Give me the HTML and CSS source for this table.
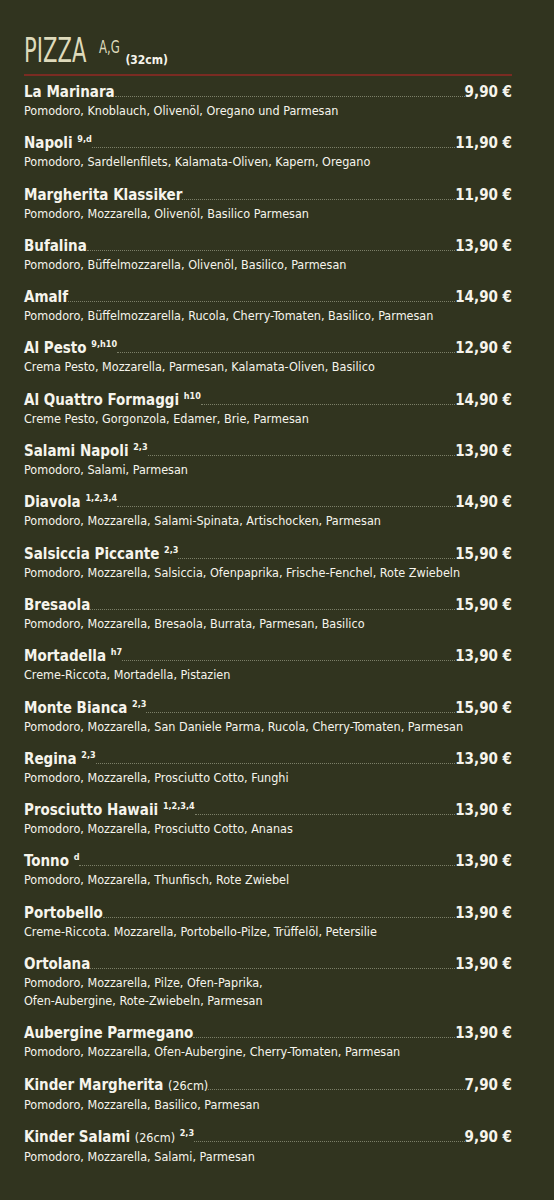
FILE: index.html
```html
<!DOCTYPE html>
<html>
<head>
  <meta charset="utf-8">
  <title>Pizza</title>
  <link rel="stylesheet" href="styles.css">
</head>
<body>
  <div class="menu">
    <h1 class="title"><span class="title-word">PIZZA</span><span class="title-allergens">A,G</span><span class="title-size">(32cm)</span></h1>

    <ul class="items">
      <li class="item">
        <div class="row"><span class="name">La Marinara</span><span class="dots"></span><span class="price">9,90 €</span></div>
        <p class="desc">Pomodoro, Knoblauch, Olivenöl, Oregano und Parmesan</p>
      </li>
      <li class="item">
        <div class="row"><span class="name">Napoli <sup>9,d</sup></span><span class="dots"></span><span class="price">11,90 €</span></div>
        <p class="desc">Pomodoro, Sardellenfilets, Kalamata-Oliven, Kapern, Oregano</p>
      </li>
      <li class="item">
        <div class="row"><span class="name">Margherita Klassiker</span><span class="dots"></span><span class="price">11,90 €</span></div>
        <p class="desc">Pomodoro, Mozzarella, Olivenöl, Basilico Parmesan</p>
      </li>
      <li class="item">
        <div class="row"><span class="name">Bufalina</span><span class="dots"></span><span class="price">13,90 €</span></div>
        <p class="desc">Pomodoro, Büffelmozzarella, Olivenöl, Basilico, Parmesan</p>
      </li>
      <li class="item">
        <div class="row"><span class="name">Amalf</span><span class="dots"></span><span class="price">14,90 €</span></div>
        <p class="desc">Pomodoro, Büffelmozzarella, Rucola, Cherry-Tomaten, Basilico, Parmesan</p>
      </li>
      <li class="item">
        <div class="row"><span class="name">Al Pesto <sup>9,h10</sup></span><span class="dots"></span><span class="price">12,90 €</span></div>
        <p class="desc">Crema Pesto, Mozzarella, Parmesan, Kalamata-Oliven, Basilico</p>
      </li>
      <li class="item">
        <div class="row"><span class="name">Al Quattro Formaggi <sup>h10</sup></span><span class="dots"></span><span class="price">14,90 €</span></div>
        <p class="desc">Creme Pesto, Gorgonzola, Edamer, Brie, Parmesan</p>
      </li>
      <li class="item">
        <div class="row"><span class="name">Salami Napoli <sup>2,3</sup></span><span class="dots"></span><span class="price">13,90 €</span></div>
        <p class="desc">Pomodoro, Salami, Parmesan</p>
      </li>
      <li class="item">
        <div class="row"><span class="name">Diavola <sup>1,2,3,4</sup></span><span class="dots"></span><span class="price">14,90 €</span></div>
        <p class="desc">Pomodoro, Mozzarella, Salami-Spinata, Artischocken, Parmesan</p>
      </li>
      <li class="item">
        <div class="row"><span class="name">Salsiccia Piccante <sup>2,3</sup></span><span class="dots"></span><span class="price">15,90 €</span></div>
        <p class="desc">Pomodoro, Mozzarella, Salsiccia, Ofenpaprika, Frische-Fenchel, Rote Zwiebeln</p>
      </li>
      <li class="item">
        <div class="row"><span class="name">Bresaola</span><span class="dots"></span><span class="price">15,90 €</span></div>
        <p class="desc">Pomodoro, Mozzarella, Bresaola, Burrata, Parmesan, Basilico</p>
      </li>
      <li class="item">
        <div class="row"><span class="name">Mortadella <sup>h7</sup></span><span class="dots"></span><span class="price">13,90 €</span></div>
        <p class="desc">Creme-Riccota, Mortadella, Pistazien</p>
      </li>
      <li class="item">
        <div class="row"><span class="name">Monte Bianca <sup>2,3</sup></span><span class="dots"></span><span class="price">15,90 €</span></div>
        <p class="desc">Pomodoro, Mozzarella, San Daniele Parma, Rucola, Cherry-Tomaten, Parmesan</p>
      </li>
      <li class="item">
        <div class="row"><span class="name">Regina <sup>2,3</sup></span><span class="dots"></span><span class="price">13,90 €</span></div>
        <p class="desc">Pomodoro, Mozzarella, Prosciutto Cotto, Funghi</p>
      </li>
      <li class="item">
        <div class="row"><span class="name">Prosciutto Hawaii <sup>1,2,3,4</sup></span><span class="dots"></span><span class="price">13,90 €</span></div>
        <p class="desc">Pomodoro, Mozzarella, Prosciutto Cotto, Ananas</p>
      </li>
      <li class="item">
        <div class="row"><span class="name">Tonno <sup>d</sup></span><span class="dots"></span><span class="price">13,90 €</span></div>
        <p class="desc">Pomodoro, Mozzarella, Thunfisch, Rote Zwiebel</p>
      </li>
      <li class="item">
        <div class="row"><span class="name">Portobello</span><span class="dots"></span><span class="price">13,90 €</span></div>
        <p class="desc">Creme-Riccota. Mozzarella, Portobello-Pilze, Trüffelöl, Petersilie</p>
      </li>
      <li class="item">
        <div class="row"><span class="name">Ortolana</span><span class="dots"></span><span class="price">13,90 €</span></div>
        <p class="desc">Pomodoro, Mozzarella, Pilze, Ofen-Paprika,<br>Ofen-Aubergine, Rote-Zwiebeln, Parmesan</p>
      </li>
      <li class="item">
        <div class="row"><span class="name">Aubergine Parmegano</span><span class="dots"></span><span class="price">13,90 €</span></div>
        <p class="desc">Pomodoro, Mozzarella, Ofen-Aubergine, Cherry-Tomaten, Parmesan</p>
      </li>
      <li class="item">
        <div class="row"><span class="name">Kinder Margherita <small>(26cm)</small></span><span class="dots"></span><span class="price">7,90 €</span></div>
        <p class="desc">Pomodoro, Mozzarella, Basilico, Parmesan</p>
      </li>
      <li class="item">
        <div class="row"><span class="name">Kinder Salami <small>(26cm)</small> <sup>2,3</sup></span><span class="dots"></span><span class="price">9,90 €</span></div>
        <p class="desc">Pomodoro, Mozzarella, Salami, Parmesan</p>
      </li>
    </ul>
  </div>
</body>
</html>
```

FILE: styles.css
```css
body {
  margin: 0;
  background: #31341f;
  color: #f6f4ec;
  font-family: "DejaVu Sans Condensed", "DejaVu Sans", sans-serif;
}

.menu {
  padding: 36px 42px 40px 24px;
}

/* heading */

.title {
  display: flex;
  align-items: baseline;
  height: 30px;
  margin: 0;
  padding-bottom: 8px;
  border-bottom: 2px solid #7a2b22;
  color: #dedabb;
  font-weight: normal;
  line-height: 30px;
  white-space: nowrap;
}

.title-word {
  display: inline-block;
  font-family: "DejaVu Sans", sans-serif;
  font-size: 33px;
  transform: scaleX(0.64);
  transform-origin: left center;
  margin-right: -40px;
}

.title-allergens {
  display: inline-block;
  font-family: "DejaVu Sans", sans-serif;
  font-size: 18px;
  transform: scaleX(0.65) translateY(-9px);
  transform-origin: left center;
  margin-left: 18px;
  margin-right: -9px;
}

.title-size {
  font-size: 12px;
  font-weight: bold;
  color: #f6f4ec;
  margin-left: 3px;
  position: relative;
  top: 2px;
}

/* list */

.items {
  list-style: none;
  margin: 0;
  padding: 6px 0 0;
}

.item {
  margin-bottom: 13.3px;
}

.row {
  display: flex;
  align-items: baseline;
  line-height: 20px;
}

.name {
  font-size: 15px;
  font-weight: bold;
  white-space: nowrap;
}

.name sup {
  font-size: 9px;
  vertical-align: 6px;
  line-height: 0;
}

.name small {
  font-size: 12.5px;
  font-weight: normal;
}

.dots {
  flex: 1;
  border-bottom: 1px dotted #7c7f68;
}

.price {
  font-size: 15px;
  font-weight: bold;
  white-space: nowrap;
}

.desc {
  margin: 0;
  font-size: 12.5px;
  line-height: 18px;
}
```
